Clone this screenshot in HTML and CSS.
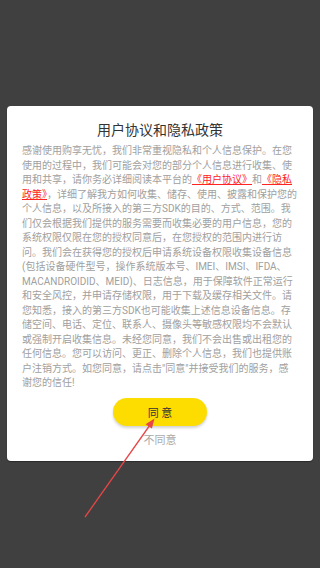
FILE: index.html
```html
<!DOCTYPE html>
<html lang="zh-CN">
<head>
<meta charset="utf-8">
<title>用户协议和隐私政策</title>
<link rel="stylesheet" href="styles.css">
</head>
<body>
<div class="screen">
  <div class="dialog">
    <h1 class="title">用户协议和隐私政策</h1>
    <p class="content">感谢使用购享无忧，我们非常重视隐私和个人信息保护。在您使用的过程中，我们可能会对您的部分个人信息进行收集、使用和共享，请你务必详细阅读本平台的<a class="link">《用户协议》</a>和<a class="link">《隐私政策》</a>，详细了解我方如何收集、储存、使用、披露和保护您的个人信息，以及所接入的第三方SDK的目的、方式、范围。我们仅会根据我们提供的服务需要而收集必要的用户信息，您的系统权限仅限在您的授权同意后，在您授权的范围内进行访问。我们会在获得您的授权后申请系统设备权限收集设备信息(包括设备硬件型号，操作系统版本号、IMEI、IMSI、IFDA、MACANDROIDID、MEID)、日志信息，用于保障软件正常运行和安全风控，并申请存储权限，用于下载及缓存相关文件。请您知悉，接入的第三方SDK也可能收集上述信息设备信息。存储空间、电话、定位、联系人、摄像头等敏感权限均不会默认或强制开启收集信息。未经您同意，我们不会出售或出租您的任何信息。您可以访问、更正、删除个人信息，我们也提供账户注销方式。如您同意，请点击"同意"并接受我们的服务，感谢您的信任!</p>
    <button class="agree">同 意</button>
    <div class="disagree">不同意</div>
  </div>
  <svg class="arrow" width="320" height="568" viewBox="0 0 320 568">
    <line x1="85" y1="517" x2="150" y2="425" stroke="#e64646" stroke-width="1.3"/>
    <polygon points="154.5,418.5 151.9,428.6 145.6,424.2" fill="#e64646"/>
  </svg>
</div>
</body>
</html>
```
FILE: styles.css
```css
html, body {
  margin: 0;
  padding: 0;
}
body {
  background: #404040;
  font-family: Roboto, "Noto Sans CJK SC", sans-serif;
}
.screen {
  position: relative;
  width: 320px;
  height: 568px;
  padding-top: 106px;
  box-sizing: border-box;
}
.dialog {
  margin: 0 7px;
  height: 355px;
  box-sizing: border-box;
  background: #fff;
  border-radius: 4px;
  box-shadow: 0 1px 1px rgba(0, 0, 0, 0.35);
  padding: 14px 15px 0;
  display: flex;
  flex-direction: column;
  align-items: center;
}
.title {
  margin: 0;
  font-size: 14px;
  line-height: 20px;
  font-weight: normal;
  color: #333;
}
.content {
  margin: 4px 0 0;
  width: 100%;
  font-size: 10px;
  line-height: 14.5px;
  color: #a0a0a0;
  text-align: left;
}
.link {
  color: #f22;
  text-decoration: underline;
}
.agree {
  margin-top: 7px;
  width: 94px;
  height: 28px;
  border: none;
  border-radius: 14px;
  background: #fddd00;
  box-shadow: 0 2px 3px rgba(0, 0, 0, 0.18);
  font-family: Roboto, "Noto Sans CJK SC", sans-serif;
  font-size: 11px;
  color: #333;
  padding: 0;
}
.disagree {
  margin-top: 8px;
  font-size: 11px;
  line-height: 14px;
  color: #aaa;
}
.arrow {
  position: absolute;
  left: 0;
  top: 0;
  pointer-events: none;
}
```
